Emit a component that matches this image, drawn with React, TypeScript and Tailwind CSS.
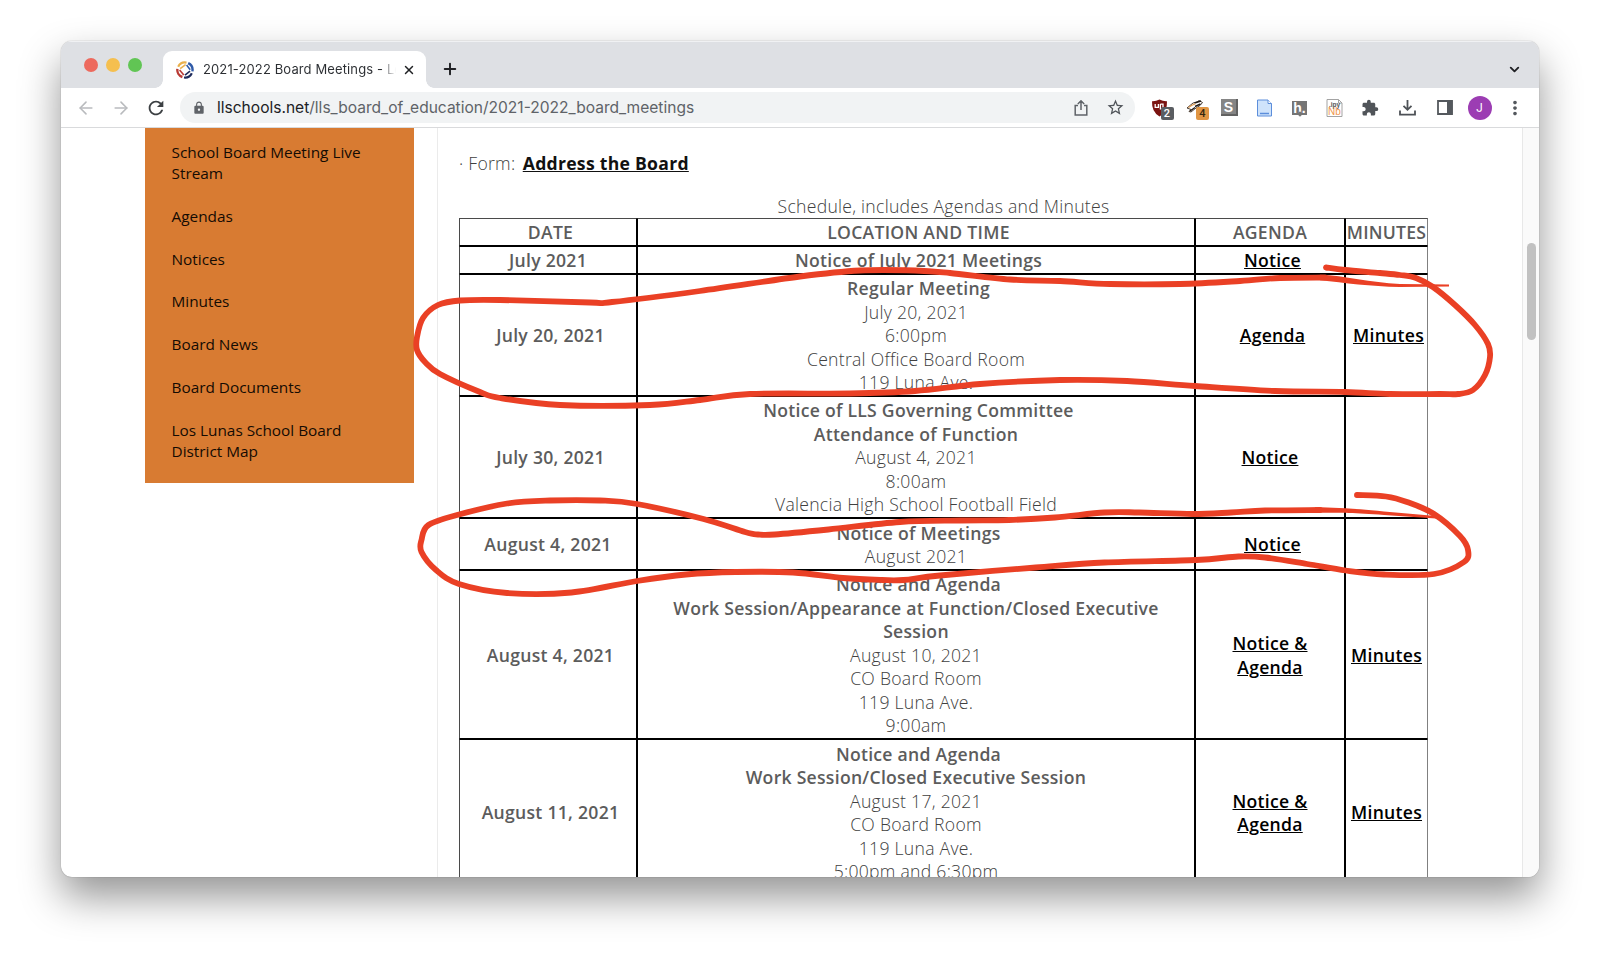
import type { ReactNode } from "react";
import { ArrowLeft, ArrowRight, ChevronDown, Plus, X } from "lucide-react";
import { MdExtension, MdLock, MdMoreVert, MdRefresh, MdStarBorder } from "react-icons/md";

const sideLinks = [
  "School Board Meeting Live Stream",
  "Agendas",
  "Notices",
  "Minutes",
  "Board News",
  "Board Documents",
  "Los Lunas School Board District Map",
];

type Row = {
  height: string;
  date: string;
  datePad?: string;
  bold: string[];
  lines: string[];
  agenda: string[];
  agendaPad?: string;
  minutes?: boolean;
  minutesPad?: string;
};

const rows: Row[] = [
  {
    height: "h-[28px]",
    date: "July 2021",
    datePad: "pl-0",
    bold: ["Notice of July 2021 Meetings"],
    lines: [],
    agenda: ["Notice"],
    agendaPad: "pl-[5px]",
  },
  {
    height: "h-[122px]",
    date: "July 20, 2021",
    bold: ["Regular Meeting"],
    lines: ["July 20, 2021", "6:00pm", "Central Office Board Room", "119 Luna Ave."],
    agenda: ["Agenda"],
    agendaPad: "pl-[5px]",
    minutes: true,
    minutesPad: "pl-[4px]",
  },
  {
    height: "h-[122px]",
    date: "July 30, 2021",
    bold: ["Notice of LLS Governing Committee", "Attendance of Function"],
    lines: ["August 4, 2021", "8:00am", "Valencia High School Football Field"],
    agenda: ["Notice"],
  },
  {
    height: "h-[52px]",
    date: "August 4, 2021",
    datePad: "pl-0",
    bold: ["Notice of Meetings"],
    lines: ["August 2021"],
    agenda: ["Notice"],
    agendaPad: "pl-[5px]",
  },
  {
    height: "h-[169px]",
    date: "August 4, 2021",
    bold: ["Notice and Agenda", "Work Session/Appearance at Function/Closed Executive", "Session"],
    lines: ["August 10, 2021", "CO Board Room", "119 Luna Ave.", "9:00am"],
    agenda: ["Notice &", "Agenda"],
    minutes: true,
  },
  {
    height: "h-[146px]",
    date: "August 11, 2021",
    bold: ["Notice and Agenda", "Work Session/Closed Executive Session"],
    lines: ["August 17, 2021", "CO Board Room", "119 Luna Ave.", "5:00pm and 6:30pm"],
    agenda: ["Notice &", "Agenda"],
    minutes: true,
  },
];

type Point = [number, number];

// smooth curve through a list of points
function curve(pts: Point[]) {
  let d = `M${pts[0][0]} ${pts[0][1]}`;
  for (let i = 0; i < pts.length - 1; i++) {
    const p0 = pts[i - 1] ?? pts[i];
    const p1 = pts[i];
    const p2 = pts[i + 1];
    const p3 = pts[i + 2] ?? p2;
    d += ` C${p1[0] + (p2[0] - p0[0]) / 6} ${p1[1] + (p2[1] - p0[1]) / 6} ${p2[0] - (p3[0] - p1[0]) / 6} ${p2[1] - (p3[1] - p1[1]) / 6} ${p2[0]} ${p2[1]}`;
  }
  return d;
}

const firstLoop: Point[] = [
  [1326, 267.5], [1345, 270], [1380, 273], [1400, 275], [1416, 278], [1433, 287], [1455, 305], [1475, 325],
  [1488, 344], [1490, 357], [1485, 375], [1473, 390], [1458, 394], [1440, 394], [1390, 394], [1345, 392],
  [1275, 391], [1195, 386], [1127, 381], [1060, 380], [980, 384], [915, 391], [850, 393.5], [750, 394],
  [700, 400], [650, 405], [560, 405], [500, 398], [480, 392], [440, 374], [425, 362], [417, 350], [417, 337],
  [423, 318], [438, 305], [460, 300.5], [500, 300], [590, 302.5], [612, 302], [700, 291], [800, 276.5],
  [860, 270.5], [915, 270.5], [950, 273], [1010, 279.5], [1060, 281], [1110, 284], [1180, 284], [1240, 281],
  [1280, 278], [1325, 277.5],
];

const secondLoop: Point[] = [
  [1357, 495], [1386, 496.5], [1407, 502], [1434, 514], [1460, 536], [1468, 550], [1464, 562], [1434, 574],
  [1384, 574.5], [1345.6, 570.5], [1307, 564], [1265, 557.5], [1238.5, 556.5], [1196, 560], [1104.5, 562.5],
  [1035.7, 567.5], [940, 575.5], [903.5, 580], [882, 580], [843, 578], [793, 572.5], [735.7, 572], [686, 574.5],
  [637, 581], [571.5, 592.5], [507, 593], [459, 584], [436, 570], [421.5, 552], [421.5, 540], [428.5, 525],
  [459, 514.5], [507, 503.5], [550, 500.5], [600, 500.5], [637, 504], [703.5, 519], [745, 532], [758, 534.5],
  [775, 534.5], [828.5, 529.5], [900, 522], [960, 520.5], [1009, 520], [1055, 517.5], [1104.5, 512.5],
  [1139, 512.5], [1192.6, 514], [1231, 512.5], [1265, 510.5], [1320, 510],
];

function Annotations() {
  return (
    <svg
      className="pointer-events-none absolute left-0 top-0"
      width="1600"
      height="958"
      viewBox="0 0 1600 958"
      fill="none"
      stroke="#ea4025"
      strokeWidth="5.8"
      strokeLinecap="round"
      strokeLinejoin="round"
    >
      <path d={curve(firstLoop)} />
      <path d="M1320 274.7 C1345 275.5 1370 282.5 1400 284 L1449 284.4 V286.6 L1400 287 C1370 286.5 1345 283 1320 280.3 Z" fill="#ea4025" stroke="none" />
      <path d={curve(secondLoop)} />
      <path d="M1315 507.2 C1335 507.4 1350 508 1384 511.5 L1436 516 V518.5 L1384 515 C1350 512.6 1335 512.8 1315 512.8 Z" fill="#ea4025" stroke="none" />
    </svg>
  );
}

function Badge({ className, children }: { className: string; children: ReactNode }) {
  return (
    <span
      className={`absolute left-[10px] top-[8px] flex h-[13px] w-[13px] items-center justify-center rounded-[2px] text-[11px] font-medium leading-none ${className}`}
    >
      {children}
    </span>
  );
}

function SchoolLogo() {
  return (
    <svg width="18" height="18" viewBox="0 0 18 18" fill="none">
      <path d="M2.2 5.8 A7.6 7.6 0 0 1 10.5 1.6" stroke="#eab04c" strokeWidth="2.2" />
      <path d="M4.2 7.6 L9.6 3.6" stroke="#eab04c" strokeWidth="1.6" />
      <path d="M12.2 2.2 A7.6 7.6 0 0 1 16.4 10.4" stroke="#2f5aa8" strokeWidth="2.4" />
      <path d="M10.6 4 L14.2 8.8" stroke="#2f5aa8" strokeWidth="1.5" />
      <path d="M1.4 7.8 A7.6 7.6 0 0 0 6.4 16" stroke="#b93a34" strokeWidth="2.4" />
      <path d="M3.6 9 L7.8 14" stroke="#b93a34" strokeWidth="1.6" />
      <path d="M8 16.5 A7.6 7.6 0 0 0 15.8 12.2" stroke="#1f2c5c" strokeWidth="2.2" />
      <path d="M9 14.2 L14 10.2" stroke="#1f2c5c" strokeWidth="1.6" />
    </svg>
  );
}

function TabStrip() {
  return (
    <div className="flex h-[47px] items-end bg-[#dee0e4] shadow-[inset_0_1px_0_#f0f1f3]">
      <div className="flex h-[46px] w-[102px] items-center gap-[8.5px] pl-[23px]">
        <span className="h-[13.5px] w-[13.5px] rounded-full bg-[#ed6a5e]" />
        <span className="h-[13.5px] w-[13.5px] rounded-full bg-[#f5bf4f]" />
        <span className="h-[13.5px] w-[13.5px] rounded-full bg-[#61c554]" />
      </div>
      <div className="relative flex h-[37px] w-[263px] items-center rounded-t-[9px] bg-white pl-[13px]">
        <span className="absolute -left-[8px] bottom-0 h-[8px] w-[8px] bg-[radial-gradient(circle_at_0_0,#dee0e4_7.5px,#fff_8px)]" />
        <span className="absolute -right-[8px] bottom-0 h-[8px] w-[8px] bg-[radial-gradient(circle_at_100%_0,#dee0e4_7.5px,#fff_8px)]" />
        <SchoolLogo />
        <span className="ml-[9px] w-[193px] overflow-hidden whitespace-nowrap bg-gradient-to-r from-[#2b2e32] from-92% to-transparent bg-clip-text font-['Inter'] text-[13px] tracking-[0.12px] text-transparent">
          2021-2022 Board Meetings - Lo
        </span>
        <X className="ml-[6px]" size={14} strokeWidth={2.5} color="#202124" />
      </div>
      <Plus className="mb-[10.5px] ml-[15px]" size={18} strokeWidth={2.6} color="#202124" />
      <ChevronDown className="mb-[11px] ml-auto mr-[17px]" size={15} strokeWidth={3} color="#202124" />
    </div>
  );
}

function Toolbar() {
  return (
    <div className="flex h-[40px] items-center border-b border-[#d9dadc] bg-white pl-[15px]">
      <ArrowLeft size={20} strokeWidth={1.9} color="#b9bbbe" />
      <ArrowRight className="ml-[14.5px]" size={20} strokeWidth={1.9} color="#b9bbbe" />
      <MdRefresh className="ml-[14.5px]" size={22} color="#3c4043" />
      <div className="ml-[13px] flex h-[31px] w-[955px] items-center rounded-full bg-[#f1f3f4] pl-[12px] font-['Inter'] text-[15.55px] text-[#5f6368]">
        <MdLock size={14} color="#5f6368" />
        <span className="ml-[11px] whitespace-nowrap">
          <span className="text-[#202124]">llschools.net</span>/lls_board_of_education/2021-2022_board_meetings
        </span>
        <svg className="ml-auto" width="16" height="18" viewBox="0 0 16 18" fill="none" stroke="#5f6368" strokeWidth="1.5">
          <path d="M5 6.5 H2.2 V16 H13.8 V6.5 H11 M8 11 V2 M4.8 5 L8 1.8 L11.2 5" />
        </svg>
        <MdStarBorder className="ml-[17.5px] mr-[10px]" size={19} color="#505459" />
      </div>

      <div className="relative ml-[15.5px]">
        <svg width="17" height="18" viewBox="0 0 17 18">
          <path d="M8.5 0.5 Q12 2.5 16 2.3 Q16.5 13 8.5 17.5 Q0.5 13 1 2.3 Q5 2.5 8.5 0.5" fill="#7b1411" />
          <path d="M4.2 5 V8.3 H7.4 V5 M9.4 5 V9.8 H12 V5.2 H9.4" fill="none" stroke="#fff" strokeWidth="1.3" />
        </svg>
        <Badge className="bg-[#5a5d61] font-['Roboto'] text-white">2</Badge>
      </div>
      <div className="relative ml-[18.5px]">
        <svg width="18" height="18" viewBox="0 0 18 18" fill="none">
          <path d="M1 9 L7 4 L11 3 L13 1.5 L16.5 3.5 L14 6.5 L10 9 L5 13 L3 12.5 L5 10.5 Z" fill="#fff" stroke="#3b2c20" strokeWidth="0.9" />
          <path d="M8.5 4 L15 2 M9 7.5 L14.5 5 M4 12 L9 8.5" stroke="#201a16" strokeWidth="1.4" />
          <path d="M2.5 8.5 L6 6.3 L9.5 4.8" stroke="#e0994c" strokeWidth="1.2" />
        </svg>
        <Badge className="bg-[#e09543] font-['Roboto'] text-[#33260f]">4</Badge>
      </div>
      <span className="ml-[17px] flex h-[17px] w-[17px] items-center justify-center border-b-2 border-r-2 border-[#626262] bg-[#858585] font-['Liberation_Sans'] text-[14px] font-bold leading-none text-white">
        S
      </span>
      <svg className="ml-[18px]" width="17" height="18" viewBox="0 0 17 18">
        <path d="M1.5 1 H12 L15.5 4.5 V17 H1.5 Z" fill="#cfe3fb" stroke="#5c8edb" />
        <path d="M12 1 V4.5 H15.5" fill="#fff" stroke="#5c8edb" />
        <path d="M4 14.5 H13" stroke="#5c8edb" strokeWidth="1.3" />
      </svg>
      <div className="relative ml-[19px] flex h-[14px] w-[15px] items-center justify-center bg-[#757575] font-['Liberation_Sans'] text-[14px] font-bold leading-none text-white">
        h.
        <span className="absolute -bottom-[1px] left-[5.5px] h-[4px] w-[4px] rotate-45 bg-[#757575]" />
      </div>
      <svg className="ml-[19px]" width="17" height="18" viewBox="0 0 17 18">
        <path d="M1 0.5 H12.5 L16 4 V17.5 H1 Z" fill="#fff" stroke="#a3a3a3" />
        <path d="M12.5 0.5 V4 H16" fill="none" stroke="#a3a3a3" />
        <text x="3" y="7.5" fontFamily="Liberation Sans" fontSize="6.5" fontWeight="700" fill="#555">.ipy</text>
        <text x="2" y="16.3" fontFamily="Liberation Sans" fontSize="10" fill="#f0964d">Nb</text>
      </svg>
      <MdExtension className="ml-[17.5px]" size={18} color="#505459" />
      <svg className="ml-[20px]" width="17" height="17" viewBox="0 0 17 17" fill="none" stroke="#4d5156" strokeWidth="1.8">
        <path d="M8.5 1 V10.5 M4.5 6.8 L8.5 10.8 L12.5 6.8 M1 11.5 V15.6 H16 V11.5" />
      </svg>
      <svg className="ml-[21px]" width="16" height="15" viewBox="0 0 16 15">
        <path d="M1 1 H15 V14 H1 Z" fill="#fff" stroke="#54585d" strokeWidth="1.8" />
        <path d="M10 0.5 H15.5 V14.5 H10 Z" fill="#54585d" />
      </svg>
      <span className="ml-[15px] flex h-[24px] w-[24px] items-center justify-center rounded-full bg-[#9c3db3] font-['Inter'] text-[12px] text-white">
        J
      </span>
      <MdMoreVert className="ml-[12px]" size={22} color="#54585d" />
    </div>
  );
}

function Sidebar() {
  return (
    <nav className="h-[355px] w-[269.4px] bg-[#d87b32] pl-[26.5px] pr-[40px] pt-[14.2px] text-[15.35px] leading-[21px] text-[#140b03]">
      {sideLinks.map((link) => (
        <a key={link} className="mb-[21.75px] block">
          {link}
        </a>
      ))}
    </nav>
  );
}

function Schedule() {
  const cell = "border border-black p-0 pt-[2px] align-middle first:border-l-[#4a4a4a] last:border-r-[#808080]";

  return (
    <table className="w-[969px] table-fixed border-separate border-spacing-0 text-center leading-[23.5px]">
      <caption className="h-[23px] text-center">Schedule, includes Agendas and Minutes</caption>
      <colgroup>
        <col className="w-[178px]" />
        <col className="w-[558px]" />
        <col className="w-[150px]" />
        <col className="w-[83px]" />
      </colgroup>
      <thead>
        <tr className="h-[28px] font-semibold text-[#5c5c5c]">
          <td className={`${cell} border-t-[#4a4a4a] pl-[5px]`}>DATE</td>
          <td className={`${cell} border-t-[#4a4a4a] pl-[5px]`}>LOCATION AND TIME</td>
          <td className={`${cell} border-t-[#4a4a4a]`}>AGENDA</td>
          <td className={`${cell} whitespace-nowrap border-t-[#4a4a4a] tracking-[0.2px]`}>MINUTES</td>
        </tr>
      </thead>
      <tbody>
        {rows.map((row, i) => (
          <tr key={i} className={row.height}>
            <td className={`${cell} font-semibold text-[#5c5c5c] ${row.datePad ?? "pl-[5px]"}`}>{row.date}</td>
            <td className={cell}>
              {row.bold.map((line) => (
                <p key={line} className="whitespace-nowrap font-semibold text-[#5c5c5c] first:pl-[5px]">{line}</p>
              ))}
              {row.lines.map((line) => (
                <p key={line}>{line}</p>
              ))}
            </td>
            <td className={`${cell} font-semibold text-black ${row.agendaPad ?? ""}`}>
              {row.agenda.map((line) => (
                <p key={line} className="underline">{line}</p>
              ))}
            </td>
            <td className={`${cell} font-semibold text-black ${row.minutesPad ?? ""}`}>
              {row.minutes && <span className="underline">Minutes</span>}
            </td>
          </tr>
        ))}
      </tbody>
    </table>
  );
}

export default function App() {
  return (
    <div className="relative h-[958px] w-[1600px] overflow-hidden bg-white pl-[61px] pt-[41px]">
      <div className="h-[836px] w-[1478px] overflow-hidden rounded-[11px] bg-white shadow-[0_20px_40px_rgba(0,0,0,0.42),0_0_1px_rgba(0,0,0,0.5)]">
        <TabStrip />
        <Toolbar />
        <div className="flex h-[749px] overflow-hidden font-['Open_Sans']">
          <div className="w-[377px] shrink-0 border-r border-[#ebebeb] pl-[84px]">
            <Sidebar />
          </div>
          <main className="h-[749px] flex-1 overflow-hidden pl-[21px] pt-[23px] text-[17.6px] font-light tracking-[0.27px] text-[#404040]">
            <p className="h-[44px] leading-[24px]">
              · Form: <a className="ml-[2.5px] font-bold text-[#111] underline">Address the Board</a>
            </p>
            <Schedule />
          </main>
          <div className="w-[17px] border-l border-[#e8e8e8] bg-[#fafafa] pl-[4px] pt-[115px]">
            <div className="h-[97px] w-[9px] rounded-full bg-[#c1c1c1]" />
          </div>
        </div>
      </div>
      <Annotations />
    </div>
  );
}
